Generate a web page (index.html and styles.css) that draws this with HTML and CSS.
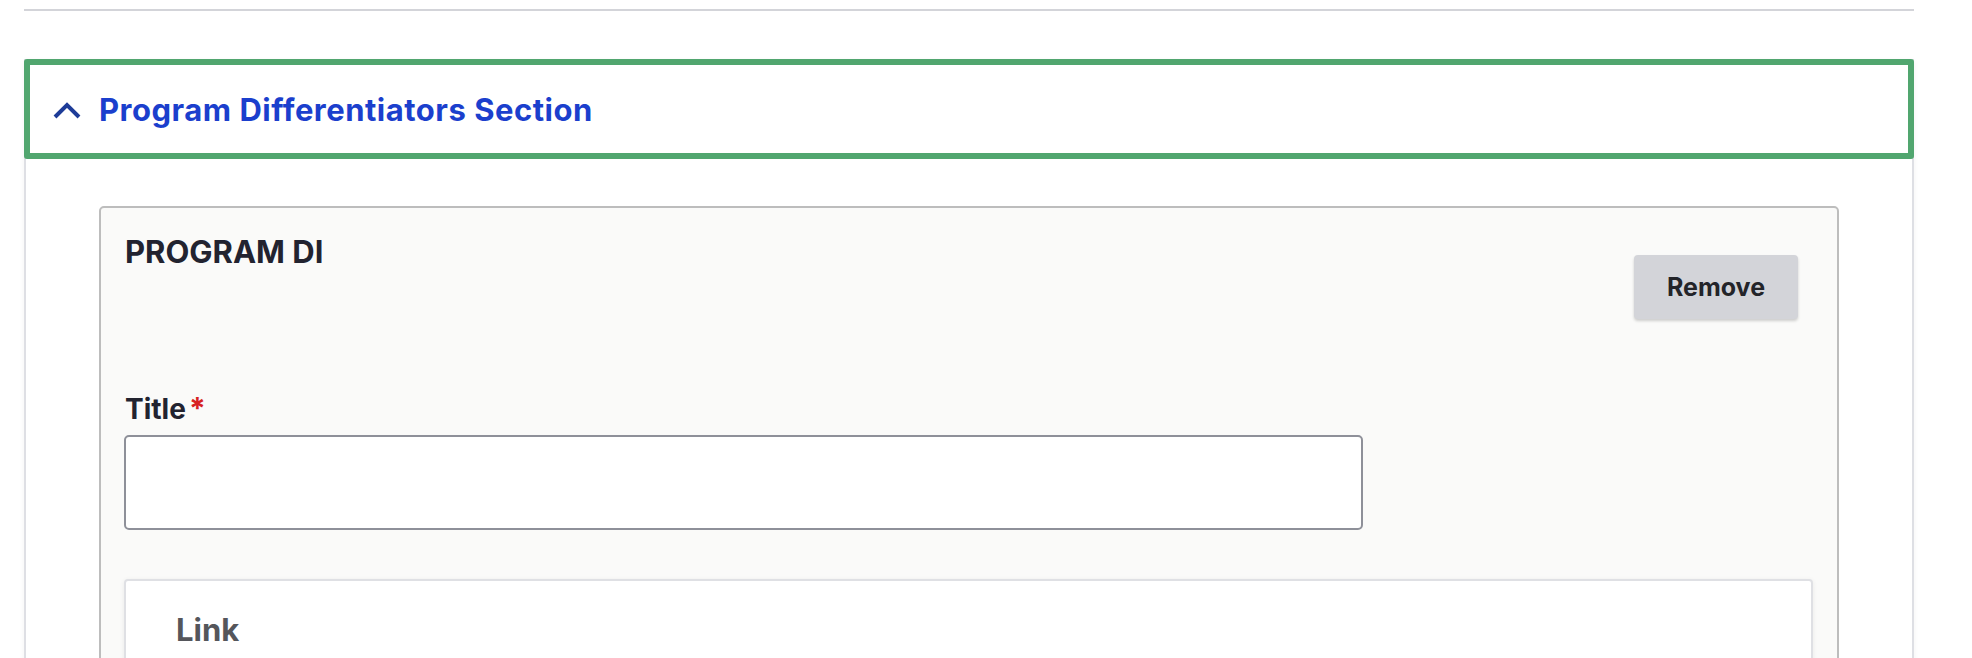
FILE: index.html
```html
<!DOCTYPE html>
<html lang="en">
<head>
<meta charset="utf-8">
<title>Program Differentiators Section</title>
<link rel="stylesheet" href="styles.css">
</head>
<body>
<div class="page">
  <hr class="rule">
  <div class="section">
    <div class="summary">
      <svg class="chev" width="28" height="18" viewBox="0 0 28 18" aria-hidden="true">
        <path d="M2 16 L14 4 L26 16" fill="none" stroke="#1e3c98" stroke-width="4"/>
      </svg>
      <span class="summary-text">Program Differentiators Section</span>
    </div>
    <div class="section-body">
      <div class="para">
        <div class="para-head">
          <h3 class="para-title">PROGRAM DIFFERENTIATOR</h3>
          <button class="btn" type="button">Remove</button>
        </div>
        <label class="label">Title<span class="req">*</span></label>
        <div class="input"></div>
        <div class="link-card">
          <h4 class="link-title">Link</h4>
        </div>
      </div>
    </div>
  </div>
</div>
</body>
</html>
```
FILE: styles.css
```css
html, body {
  margin: 0;
  padding: 0;
  background: #ffffff;
  height: 658px;
  overflow: hidden;
}
body {
  font-family: Inter, "Noto Sans", "Liberation Sans", sans-serif;
  color: #222330;
}
.page {
  width: 1890px;
  margin-left: 24px;
}
.rule {
  margin: 9px 0 0 0;
  height: 2px;
  border: 0;
  background: #d3d4d9;
}
.section {
  margin-top: 48px;
  border: 2px solid #dedfe4;
  border-top: 0;
  box-shadow: 0 2px 6px rgba(0, 0, 0, 0.05);
  height: 700px;
}
.summary {
  margin: 0 -2px;
  border: 6px solid #51a66f;
  border-radius: 3px;
  background: #fff;
  display: flex;
  align-items: center;
  padding: 27px 0 25px 23px;
  gap: 18px;
}
.chev {
  display: block;
}
.summary-text {
  font-size: 31px;
  line-height: 36px;
  font-weight: 700;
  color: #1b3fcd;
  letter-spacing: 0.5px;
}
.section-body {
  padding: 47px 73px 0 73px;
}
.para {
  border: 2px solid #bdbdbd;
  border-radius: 5px;
  background: #fafaf9;
  padding: 25px 24px 0 23px;
  height: 700px;
}
.para-head {
  display: flex;
  justify-content: space-between;
  align-items: flex-start;
}
.para-title {
  margin: 0;
  width: 197px;
  overflow: hidden;
  white-space: nowrap;
  font-size: 31px;
  line-height: 38px;
  font-weight: 700;
  color: #222330;
  padding-left: 1px;
}
.btn {
  margin: 22px 15px 0 0;
  width: 164px;
  height: 64px;
  border: 0;
  border-radius: 4px;
  background: #d3d4d9;
  box-shadow: 0 2px 3px rgba(0, 0, 0, 0.18);
  font-family: inherit;
  font-size: 25px;
  font-weight: 700;
  color: #232429;
}
.label {
  display: block;
  margin-top: 71px;
  font-size: 28px;
  line-height: 36px;
  font-weight: 700;
  color: #222330;
  padding-left: 1px;
}
.req {
  color: #d72222;
  margin-left: 3px;
  font-size: 30px;
}
.input {
  margin-top: 8px;
  width: 1239px;
  height: 95px;
  box-sizing: border-box;
  border: 2px solid #8e9099;
  border-radius: 5px;
  background: #ffffff;
}
.link-card {
  margin-top: 49px;
  border: 2px solid #dfe0e4;
  border-radius: 4px;
  background: #ffffff;
  box-shadow: 0 1px 5px rgba(0, 0, 0, 0.07);
  padding: 30px 0 0 50px;
  height: 300px;
}
.link-title {
  margin: 0;
  font-size: 31px;
  line-height: 38px;
  font-weight: 700;
  color: #55565b;
}
```
